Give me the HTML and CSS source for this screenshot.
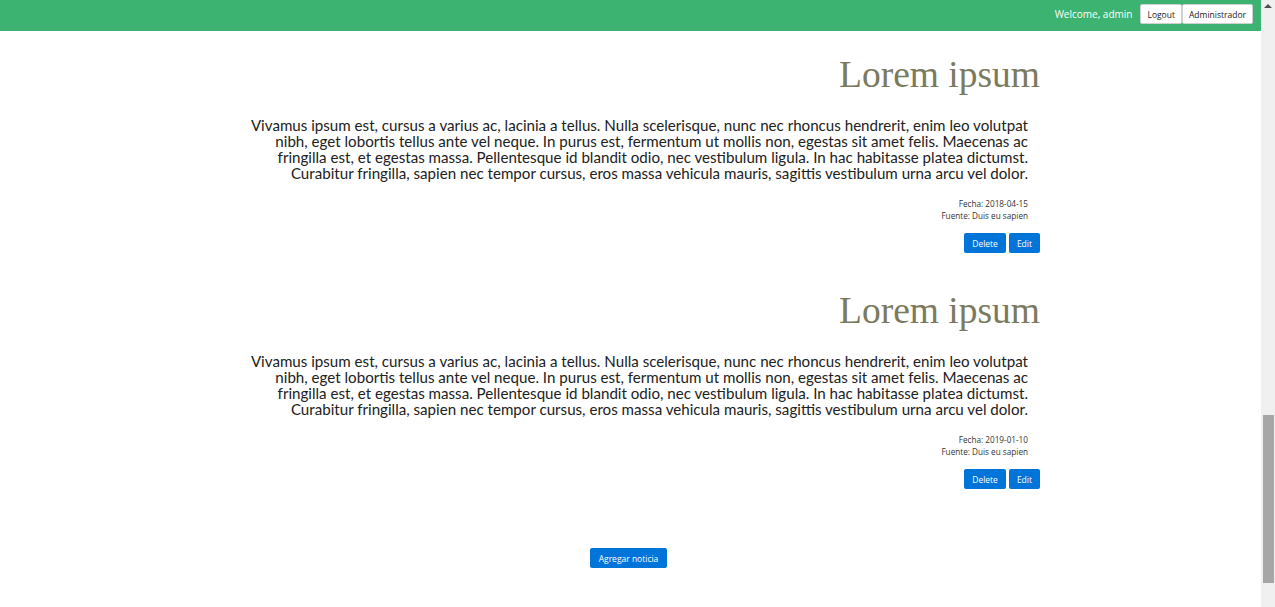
FILE: index.html
```html
<!DOCTYPE html>
<html lang="es">
<head>
<meta charset="utf-8">
<title>Noticias</title>
<link rel="stylesheet" href="styles.css">
</head>
<body>
<div class="app">
  <div class="viewport">
    <header class="navbar">
      <span class="welcome">Welcome, admin</span>
      <div class="nav-buttons">
        <button class="nav-btn">Logout</button>
        <button class="nav-btn">Administrador</button>
      </div>
    </header>
    <main class="content">
      <article class="post">
        <h1 class="post-title">Lorem ipsum</h1>
        <p class="post-body">Vivamus ipsum est, cursus a varius ac, lacinia a tellus. Nulla scelerisque, nunc nec rhoncus hendrerit, enim leo volutpat nibh, eget lobortis tellus ante vel neque. In purus est, fermentum ut mollis non, egestas sit amet felis. Maecenas ac fringilla est, et egestas massa. Pellentesque id blandit odio, nec vestibulum ligula. In hac habitasse platea dictumst. Curabitur fringilla, sapien nec tempor cursus, eros massa vehicula mauris, sagittis vestibulum urna arcu vel dolor.</p>
        <div class="post-meta">
          <div>Fecha: 2018-04-15</div>
          <div>Fuente: Duis eu sapien</div>
        </div>
        <div class="post-actions">
          <button class="btn">Delete</button>
          <button class="btn">Edit</button>
        </div>
      </article>
      <article class="post">
        <h1 class="post-title">Lorem ipsum</h1>
        <p class="post-body">Vivamus ipsum est, cursus a varius ac, lacinia a tellus. Nulla scelerisque, nunc nec rhoncus hendrerit, enim leo volutpat nibh, eget lobortis tellus ante vel neque. In purus est, fermentum ut mollis non, egestas sit amet felis. Maecenas ac fringilla est, et egestas massa. Pellentesque id blandit odio, nec vestibulum ligula. In hac habitasse platea dictumst. Curabitur fringilla, sapien nec tempor cursus, eros massa vehicula mauris, sagittis vestibulum urna arcu vel dolor.</p>
        <div class="post-meta">
          <div>Fecha: 2019-01-10</div>
          <div>Fuente: Duis eu sapien</div>
        </div>
        <div class="post-actions">
          <button class="btn">Delete</button>
          <button class="btn">Edit</button>
        </div>
      </article>
      <div class="add-row">
        <button class="btn btn-add">Agregar noticia</button>
      </div>
    </main>
  </div>
  <div class="scrollbar">
    <div class="scroll-arrow"></div>
    <div class="scroll-track">
      <div class="scroll-thumb"></div>
    </div>
  </div>
</div>
</body>
</html>
```
FILE: styles.css
```css
html, body {
  margin: 0;
  padding: 0;
  height: 100%;
  overflow: hidden;
  background: #ffffff;
}

body {
  font-family: Lato, "Open Sans", sans-serif;
  color: #212121;
}

.app {
  display: flex;
  height: 607px;
}

.viewport {
  flex: 1;
  display: flex;
  flex-direction: column;
}

.navbar {
  height: 31px;
  box-sizing: border-box;
  background: #3cb371;
  display: flex;
  justify-content: flex-end;
  align-items: flex-start;
  padding: 4px 8px 0 0;
  flex-shrink: 0;
}

.welcome {
  color: #ffffff;
  font-family: "Open Sans", sans-serif;
  font-size: 10px;
  line-height: 20px;
  margin-right: 8px;
}

.nav-buttons {
  display: flex;
}

.nav-btn {
  font-family: "Open Sans", sans-serif;
  font-size: 8.5px;
  color: #212121;
  background: #ffffff;
  border: 1px solid #d0d0d0;
  border-radius: 2px;
  height: 20px;
  padding: 0 6px;
  margin: 0;
  cursor: pointer;
}

.content {
  display: flex;
  flex-direction: column;
  padding: 0 221px 0 246px;
}

.post {
  display: flex;
  flex-direction: column;
  align-items: flex-end;
  height: 236px;
}

.post-title {
  font-family: "Liberation Serif", "Times New Roman", serif;
  font-weight: normal;
  font-size: 37.5px;
  line-height: 44px;
  color: #7b7a5e;
  margin: 22px 0 0 0;
}

.post-body {
  text-align: right;
  font-size: 15.13px;
  line-height: 16px;
  margin: 20px 12px 0 0;
}

.post-meta {
  text-align: right;
  font-family: "Open Sans", sans-serif;
  font-size: 8.2px;
  line-height: 12px;
  color: #333333;
  margin: 17px 12px 0 0;
}

.post-actions {
  display: flex;
  gap: 3px;
  margin-top: 11px;
}

.btn {
  font-family: "Open Sans", sans-serif;
  font-size: 8.5px;
  color: #ffffff;
  background: #0074d9;
  border: none;
  border-radius: 2px;
  height: 20px;
  padding: 0 8px;
  margin: 0;
  cursor: pointer;
}

.add-row {
  display: flex;
  justify-content: center;
  margin-top: 45px;
  margin-left: -246px;
  margin-right: -221px;
}

.btn-add {
  padding: 0 9px;
  margin-right: 4px;
}

.scrollbar {
  width: 14px;
  background: #f0f0f0;
  display: flex;
  flex-direction: column;
  flex-shrink: 0;
}

.scroll-arrow {
  height: 14px;
  position: relative;
}

.scroll-arrow::after {
  content: "";
  position: absolute;
  left: 3px;
  top: 4px;
  border-left: 4px solid transparent;
  border-right: 4px solid transparent;
  border-bottom: 4px solid #505050;
}

.scroll-track {
  flex: 1;
  display: flex;
  flex-direction: column;
  justify-content: flex-end;
  padding: 0 1px 24px 2px;
}

.scroll-thumb {
  height: 168px;
  background: #a6a6a6;
}
```
